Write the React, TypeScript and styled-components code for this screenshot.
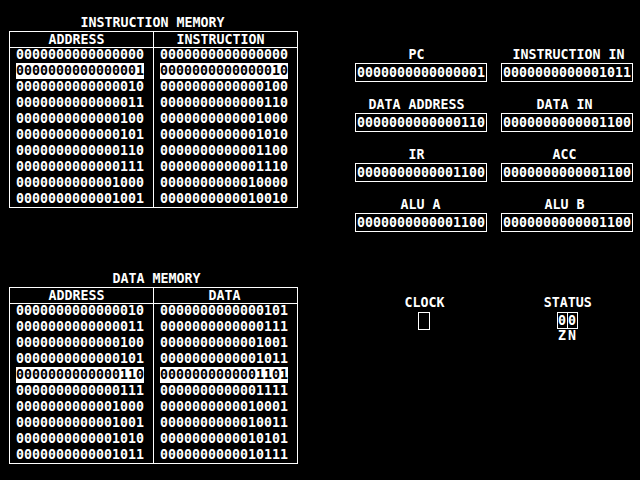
import React from 'react';
import styled, { createGlobalStyle } from 'styled-components';

const GlobalStyle = createGlobalStyle`
  html, body {
    margin: 0;
    padding: 0;
    background: #000;
  }
  body {
    width: 640px;
    height: 480px;
    overflow: hidden;
    color: #fff;
    font-family: "DejaVu Sans Mono", "Liberation Mono", monospace;
    font-weight: bold;
    font-size: 13.29px;
    line-height: 16px;
  }
`;

const bin16 = (n: number) => n.toString(2).padStart(16, '0');

const shiftPad = (s: number) =>
  `padding-left: ${s > 0 ? 2 * s : 0}px; padding-right: ${s < 0 ? -2 * s : 0}px;`;

const Screen = styled.div`
  display: flex;
  align-items: flex-start;
  box-sizing: border-box;
  width: 640px;
  height: 480px;
  padding: 15px 0 0 9px;
`;

const LeftColumn = styled.div`
  display: flex;
  flex-direction: column;
  gap: 63px;
  width: 289px;
`;

const Section = styled.section`
  display: flex;
  flex-direction: column;
`;

const Title = styled.div<{ $shift: number }>`
  box-sizing: border-box;
  height: 16px;
  line-height: 16px;
  text-align: center;
  white-space: pre;
  ${(p) => shiftPad(p.$shift)}
`;

const Table = styled.div`
  display: flex;
  border: 1px solid #fff;
`;

const Column = styled.div<{ $divider?: boolean }>`
  display: flex;
  flex-direction: column;
  width: 143px;
  border-right: ${(p) => (p.$divider ? '1px solid #fff' : 'none')};
`;

const Header = styled.div<{ $shift: number }>`
  box-sizing: border-box;
  height: 16px;
  line-height: 15px;
  border-bottom: 1px solid #fff;
  text-align: center;
  ${(p) => shiftPad(p.$shift)}
`;

const Rows = styled.div`
  display: flex;
  flex-direction: column;
  margin-top: -1px;
`;

const Row = styled.div`
  height: 16px;
  padding-left: 6px;
`;

const Value = styled.span<{ $hl?: boolean }>`
  display: inline-block;
  width: 128px;
  height: 16px;
  line-height: 16px;
  background: ${(p) => (p.$hl ? '#fff' : 'transparent')};
  color: ${(p) => (p.$hl ? '#000' : '#fff')};
`;

const RightPanel = styled.div`
  display: flex;
  flex-direction: column;
  gap: 63px;
  margin: 32px 0 0 57px;
`;

const RegisterGrid = styled.div`
  display: grid;
  grid-template-columns: 132px 132px;
  column-gap: 14px;
  row-gap: 15px;
`;

const Register = styled.div`
  display: flex;
  flex-direction: column;
`;

const Label = styled.div<{ $shift: number }>`
  box-sizing: border-box;
  height: 16px;
  line-height: 16px;
  text-align: center;
  white-space: pre;
  ${(p) => shiftPad(p.$shift)}
`;

const RegBox = styled.div`
  box-sizing: border-box;
  width: 132px;
  height: 19px;
  border: 1px solid #fff;
  padding: 0 1px;
  line-height: 17px;
`;

const IndicatorGrid = styled.div`
  display: grid;
  grid-template-columns: 132px 132px;
  column-gap: 14px;
`;

const Indicator = styled.div`
  display: flex;
  flex-direction: column;
  align-items: center;
`;

const ClockBox = styled.div`
  box-sizing: border-box;
  width: 12px;
  height: 18px;
  margin: 1px 0 0 6px;
  border: 1px solid #fff;
`;

const FlagBox = styled.div`
  display: flex;
  box-sizing: border-box;
  height: 17px;
  margin-top: 1px;
  border: 1px solid #fff;
`;

const FlagCell = styled.div<{ $sep?: boolean }>`
  width: 9px;
  height: 15px;
  line-height: 15px;
  text-align: center;
  overflow: visible;
  border-left: ${(p) => (p.$sep ? '1px solid #fff' : 'none')};
`;

const FlagNames = styled.div`
  display: flex;
  gap: 1px;
  padding-left: 1px;
  width: 21px;
  box-sizing: border-box;
`;

const FlagName = styled.div`
  width: 9px;
  height: 13px;
  line-height: 13px;
  text-align: center;
`;

type MemProps = {
  title: string;
  titleShift: number;
  rightHeader: string;
  rightShift: number;
  rows: [number, number][];
  highlight: number;
};

const MemoryTable: React.FC<MemProps> = ({ title, titleShift, rightHeader, rightShift, rows, highlight }) => (
  <Section>
    <Title $shift={titleShift}>{title}</Title>
    <Table>
      <Column $divider>
        <Header $shift={-5}>ADDRESS</Header>
        <Rows>
          {rows.map(([a], i) => (
            <Row key={i}>
              <Value $hl={i === highlight}>{bin16(a)}</Value>
            </Row>
          ))}
        </Rows>
      </Column>
      <Column>
        <Header $shift={rightShift}>{rightHeader}</Header>
        <Rows>
          {rows.map(([, d], i) => (
            <Row key={i}>
              <Value $hl={i === highlight}>{bin16(d)}</Value>
            </Row>
          ))}
        </Rows>
      </Column>
    </Table>
  </Section>
);

const registers: { name: string; value: number; shift: number }[] = [
  { name: 'PC', value: 1, shift: -4.5 },
  { name: 'INSTRUCTION IN', value: 11, shift: 1.5 },
  { name: 'DATA ADDRESS', value: 6, shift: -4.5 },
  { name: 'DATA IN', value: 12, shift: -2.5 },
  { name: 'IR', value: 12, shift: -4.5 },
  { name: 'ACC', value: 12, shift: -2.5 },
  { name: 'ALU A', value: 12, shift: -0.5 },
  { name: 'ALU B', value: 12, shift: -2.5 },
];

const instrRows: [number, number][] = Array.from({ length: 10 }, (_, i) => [i, i * 2]);
const dataRows: [number, number][] = Array.from({ length: 10 }, (_, i) => [i + 2, (i + 2) * 2 + 1]);

export default function App() {
  return (
    <>
      <GlobalStyle />
      <Screen>
        <LeftColumn>
          <MemoryTable
            title="INSTRUCTION MEMORY"
            titleShift={-1}
            rightHeader="INSTRUCTION"
            rightShift={-5}
            rows={instrRows}
            highlight={1}
          />
          <MemoryTable
            title="DATA MEMORY"
            titleShift={3}
            rightHeader="DATA"
            rightShift={-1}
            rows={dataRows}
            highlight={4}
          />
        </LeftColumn>
        <RightPanel>
          <RegisterGrid>
            {registers.map((r) => (
              <Register key={r.name}>
                <Label $shift={r.shift}>{r.name}</Label>
                <RegBox>{bin16(r.value)}</RegBox>
              </Register>
            ))}
          </RegisterGrid>
          <IndicatorGrid>
            <Indicator>
              <Label $shift={3.5}>CLOCK</Label>
              <ClockBox />
            </Indicator>
            <Indicator>
              <Label $shift={0.75}>STATUS</Label>
              <FlagBox>
                <FlagCell>0</FlagCell>
                <FlagCell $sep>0</FlagCell>
              </FlagBox>
              <FlagNames>
                <FlagName>Z</FlagName>
                <FlagName>N</FlagName>
              </FlagNames>
            </Indicator>
          </IndicatorGrid>
        </RightPanel>
      </Screen>
    </>
  );
}
